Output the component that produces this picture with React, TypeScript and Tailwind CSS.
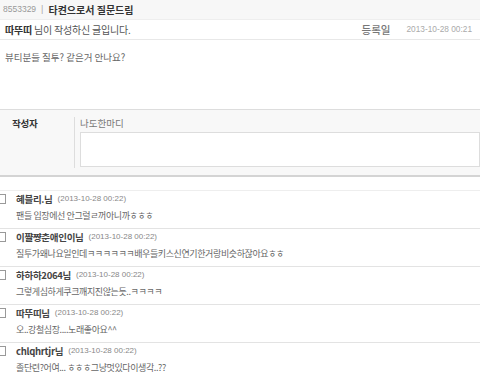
const comments = [
  { name: "혜블리.님", date: "(2013-10-28 00:22)", text: "팬들 입장에선 안그럴ㄹ꺼아니까ㅎㅎㅎ" },
  { name: "이쨜쨩춘애인이님", date: "(2013-10-28 00:22)", text: "질투가왜나요일인데ㅋㅋㅋㅋㅋㅋ배우들키스신연기한거랑비슷하잖아요ㅎㅎ" },
  { name: "하하하2064님", date: "(2013-10-28 00:22)", text: "그렇게심하게쿠크깨지진않는듯..ㅋㅋㅋㅋ" },
  { name: "따뚜띠님", date: "(2013-10-28 00:22)", text: "오..강철심장....노래좋아요^^" },
  { name: "chlqhrtjr님", date: "(2013-10-28 00:22)", text: "졸단련?어여... ㅎㅎㅎ그냥멋있다이생각..??" },
]

const num = "font-['Liberation_Sans',sans-serif]"

export default function App() {
  return (
    <div className="w-[480px] h-[379px] overflow-hidden bg-white font-['Noto_Sans_CJK_KR',sans-serif] text-[11px] text-[#555]">
      <div className="h-[20px] bg-[#f7f7f7] border-b border-[#eee] flex items-center pl-[3px]">
        <span className={`${num} text-[#999] text-[8.5px]`}>8553329</span>
        <span className={`${num} mx-[5px] text-[#aaa] text-[9px]`}>|</span>
        <span className="font-bold text-[10px] text-[#333]">타켠으로서 질문드림</span>
      </div>
      <div className="h-[20px] flex items-center justify-between border-b border-[#e8e8e8] pl-[5px] pr-[8px] text-[10px]">
        <div className="tracking-[-0.2px]">
          <b className="text-[#333]">따뚜띠</b> 님이 작성하신 글입니다.
        </div>
        <div className="flex items-center">
          <span className="text-[#777] text-[10.5px] font-medium">등록일</span>
          <span className={`${num} ml-[16px] text-[8.3px] text-[#aaa]`}>2013-10-28 00:21</span>
        </div>
      </div>
      <div className="h-[69px] pl-[5px] pt-[10px] leading-[14px] text-[9.5px] text-[#666]">뷰티분들 질투? 같은거 안나요?</div>
      <div className="border-t border-[#ddd] border-b-2 border-b-[#d4d4d4] bg-[#f8f8f8] h-[68px] flex">
        <div className="w-[74px] pl-[12px] pt-[6px] font-bold text-[9.5px] text-[#333] tracking-[-0.3px]">작성자</div>
        <div className="flex-1 border-l border-[#ddd] my-[7px] pl-[5px]">
          <div className="text-[#777] text-[9.5px] leading-[12px]">나도한마디</div>
          <div className="mt-[3px] h-[35px] border border-[#ddd] bg-white" />
        </div>
      </div>
      <div className="mt-[13px] border-t border-[#eee]">
        {comments.map((c, i) => (
          <div key={i} className="h-[38px] border-b border-[#e3e3e3] pt-[1px]">
            <div className="flex items-center h-[14px]">
              <div className="w-[10px] h-[10px] border border-[#999] bg-white -ml-[4px] mr-[10px]" />
              <span className="font-bold text-[9.5px] text-[#444] tracking-[-0.3px]">{c.name}</span>
              <span className={`${num} ml-[5px] text-[8px] text-[#888]`}>{c.date}</span>
            </div>
            <div className="pl-[16px] mt-[3px] text-[9px] tracking-[-0.4px] text-[#666]">{c.text}</div>
          </div>
        ))}
      </div>
    </div>
  )
}
